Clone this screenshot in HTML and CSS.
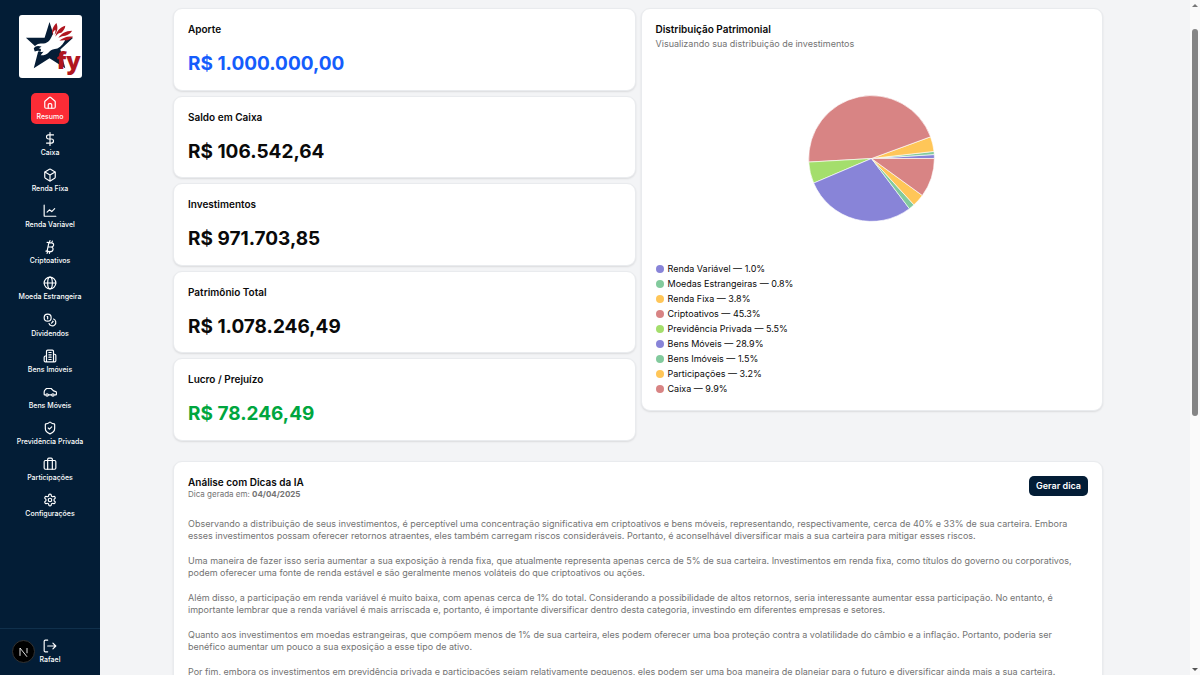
FILE: index.html
```html
<!DOCTYPE html>
<html lang="pt-BR">
<head>
    <meta charset="UTF-8">
    <meta name="viewport" content="width=device-width, initial-scale=1">
    <title>Resumo</title>
    <link rel="stylesheet" href="styles.css">
</head>
<body>
<div class="layout">
    <aside class="sidebar">
        <a class="logo" href="#" aria-label="fy">
            <svg viewBox="0 0 64 64">
                <path fill="#051d36" d="M31 7l5 16h19L42 35l5 19-16-10-16 10 5-19L7 23h19z"/>
                <path fill="#fff" d="M15 34c2-5 6-5 10-5 5-1 7-4 9-9l4-3 10 6c-2 5-5 9-9 11-4 1-6 1-8 3-2 3-5 4-9 4l3-4c-2 1-5 1-6-1z"/>
                <path fill="#051d36" d="M15 34c2-3 4-3 8-2l-3 2c3 0 3 2 1 4 0-2-2-2-5-1z"/>
                <path fill="#b0161f" d="M38 8c-4 4-5 8-4 13 0-3 1-5 3-6 0 2 0 3-1 5 3-3 4-7 2-12zM47 11c-6 2-9 6-10 11 2-3 4-4 6-4 2-2 4-4 4-7zM54 16c-7 0-11 3-14 7 3-1 5-2 7-2 3-1 5-2 7-5zM55 22c-6-1-10 1-14 4 3 0 5-1 7 0 3-1 5-2 7-4z"/>
                <text x="38" y="55" class="logo-text">fy</text>
            </svg>
        </a>
        <nav class="menu">
            <a class="menu-item active" href="#">
                <svg class="icon" viewBox="0 0 24 24"><path d="M15 21v-6a2 2 0 0 0-2-2h-2a2 2 0 0 0-2 2v6"/><path d="M3 10a2 2 0 0 1 .7-1.500l7-6a2 2 0 0 1 2.600 0l7 6A2 2 0 0 1 21 10v9a2 2 0 0 1-2 2H5a2 2 0 0 1-2-2z"/></svg>
                Resumo
            </a>
            <a class="menu-item" href="#">
                <svg class="icon" viewBox="0 0 24 24"><path d="M12 1v22M18 5H9.500a3.500 3.500 0 0 0 0 7h5a3.500 3.500 0 0 1 0 7H6"/></svg>
                Caixa
            </a>
            <a class="menu-item" href="#">
                <svg class="icon" viewBox="0 0 24 24"><path d="M21 8a2 2 0 0 0-1-1.700l-7-4a2 2 0 0 0-2 0l-7 4A2 2 0 0 0 3 8v8a2 2 0 0 0 1 1.700l7 4a2 2 0 0 0 2 0l7-4a2 2 0 0 0 1-1.700z"/><path d="M3.300 7l8.700 5 8.700-5M12 22V12"/></svg>
                Renda Fixa
            </a>
            <a class="menu-item" href="#">
                <svg class="icon" viewBox="0 0 24 24"><path d="M2 2v18a1 1 0 0 0 1 1h19"/><path d="M7 14l4-4 4 3 5-5"/></svg>
                Renda Variável
            </a>
            <a class="menu-item" href="#">
                <svg class="icon" viewBox="0 0 24 24"><path d="M7 4l8 1c5 1 4 7-1 7H9M14 12c5 1 4 8-2 8l-7-1M10 5L7 19M12 1l-1 3M16 2l-1 3M8 20l-1 3M12 20l-1 3"/></svg>
                Criptoativos
            </a>
            <a class="menu-item" href="#">
                <svg class="icon" viewBox="0 0 24 24"><circle cx="12" cy="12" r="10"/><ellipse cx="12" cy="12" rx="4" ry="10"/><path d="M2 12h20"/></svg>
                Moeda Estrangeira
            </a>
            <a class="menu-item" href="#">
                <svg class="icon" viewBox="0 0 24 24"><circle cx="8" cy="8" r="6"/><path d="M18.100 10.400A6 6 0 1 1 10.300 18M7 6h1v4M16.700 13.900l.7.7-2.800 2.800"/></svg>
                Dividendos
            </a>
            <a class="menu-item" href="#">
                <svg class="icon" viewBox="0 0 24 24"><path d="M6 22V4a2 2 0 0 1 2-2h8a2 2 0 0 1 2 2v18zM6 12H4a2 2 0 0 0-2 2v6a2 2 0 0 0 2 2h2M18 9h2a2 2 0 0 1 2 2v9a2 2 0 0 1-2 2h-2M10 6h4M10 10h4M10 14h4M10 18h4"/></svg>
                Bens Imóveis
            </a>
            <a class="menu-item" href="#">
                <svg class="icon" viewBox="0 0 24 24"><path d="M4 17H3c-1 0-1-1-1-1v-4c0-2 1-3 2-4l2-2h8l4 4 3 1c1 0 2 1 2 2v3c0 1-1 1-1 1h-2M9 17h6"/><circle cx="7" cy="17" r="2"/><circle cx="17" cy="17" r="2"/></svg>
                Bens Móveis
            </a>
            <a class="menu-item" href="#">
                <svg class="icon" viewBox="0 0 24 24"><path d="M20 13c0 5-3.500 7.500-8 9-4.500-1.500-8-4-8-9V6a1 1 0 0 1 1-1c2 0 4.500-1.200 6.200-2.700a1 1 0 0 1 1.600 0C14.500 3.800 17 5 19 5a1 1 0 0 1 1 1z"/><path d="M9 12l2 2 4-4"/></svg>
                Previdência Privada
            </a>
            <a class="menu-item" href="#">
                <svg class="icon" viewBox="0 0 24 24"><rect x="2" y="6" width="20" height="15" rx="2"/><path d="M8 21V4a2 2 0 0 1 2-2h4a2 2 0 0 1 2 2v17"/></svg>
                Participações
            </a>
            <a class="menu-item" href="#">
                <svg class="icon" viewBox="0 0 24 24"><path d="M12.220 2h-.44a2 2 0 0 0-2 2v.18a2 2 0 0 1-1 1.730l-.43.25a2 2 0 0 1-2 0l-.15-.08a2 2 0 0 0-2.730.73l-.22.38a2 2 0 0 0 .73 2.730l.15.1a2 2 0 0 1 1 1.720v.51a2 2 0 0 1-1 1.740l-.15.09a2 2 0 0 0-.73 2.730l.22.38a2 2 0 0 0 2.730.73l.15-.08a2 2 0 0 1 2 0l.43.25a2 2 0 0 1 1 1.730V20a2 2 0 0 0 2 2h.44a2 2 0 0 0 2-2v-.18a2 2 0 0 1 1-1.730l.43-.25a2 2 0 0 1 2 0l.15.08a2 2 0 0 0 2.730-.73l.22-.39a2 2 0 0 0-.73-2.730l-.15-.08a2 2 0 0 1-1-1.740v-.5a2 2 0 0 1 1-1.740l.15-.09a2 2 0 0 0 .73-2.730l-.22-.38a2 2 0 0 0-2.730-.73l-.15.08a2 2 0 0 1-2 0l-.43-.25a2 2 0 0 1-1-1.730V4a2 2 0 0 0-2-2z"/><circle cx="12" cy="12" r="3"/></svg>
                Configurações
            </a>
        </nav>
        <div class="user">
            <a class="menu-item" href="#">
                <svg class="icon" viewBox="0 0 24 24"><path d="M8 2H4a2 2 0 0 0-2 2v16a2 2 0 0 0 2 2h4M8 12h14M17 7l5 5-5 5"/></svg>
                Rafael
            </a>
        </div>
    </aside>

    <main class="content">
        <div class="container">
            <div class="summary">
                <div class="totals">
                    <section class="card">
                        <h2 class="card-title">Aporte</h2>
                        <p class="value blue">R$ 1.000.000,00</p>
                    </section>
                    <section class="card">
                        <h2 class="card-title">Saldo em Caixa</h2>
                        <p class="value">R$ 106.542,64</p>
                    </section>
                    <section class="card">
                        <h2 class="card-title">Investimentos</h2>
                        <p class="value">R$ 971.703,85</p>
                    </section>
                    <section class="card">
                        <h2 class="card-title">Patrimônio Total</h2>
                        <p class="value">R$ 1.078.246,49</p>
                    </section>
                    <section class="card">
                        <h2 class="card-title">Lucro / Prejuízo</h2>
                        <p class="value green">R$ 78.246,49</p>
                    </section>
                </div>

                <section class="card chart-card">
                    <h2 class="card-title">Distribuição Patrimonial</h2>
                    <p class="card-subtitle">Visualizando sua distribuição de investimentos</p>
                    <svg class="pie" viewBox="-101 -101 202 202" role="img" aria-label="Distribuição Patrimonial">
                        <path fill="#8884d8" d="M0 0L100 0A100 100 0 0 0 99.800 -6.300Z"/>
                        <path fill="#82ca9d" d="M0 0L99.800 -6.300A100 100 0 0 0 99.400 -11.300Z"/>
                        <path fill="#ffc658" d="M0 0L99.400 -11.300A100 100 0 0 0 93.900 -34.500Z"/>
                        <path fill="#d88484" d="M0 0L93.900 -34.500A100 100 0 0 0 -99.800 5.700Z"/>
                        <path fill="#a4de6c" d="M0 0L-99.800 5.700A100 100 0 0 0 -92 39.100Z"/>
                        <path fill="#8884d8" d="M0 0L-92 39.100A100 100 0 0 0 60.300 79.800Z"/>
                        <path fill="#82ca9d" d="M0 0L60.300 79.800A100 100 0 0 0 67.500 73.700Z"/>
                        <path fill="#ffc658" d="M0 0L67.500 73.700A100 100 0 0 0 80.900 58.800Z"/>
                        <path fill="#d88484" d="M0 0L80.900 58.800A100 100 0 0 0 100 0Z"/>
                    </svg>
                    <ul class="legend">
                        <li><span class="dot purple"></span>Renda Variável — 1.0%</li>
                        <li><span class="dot mint"></span>Moedas Estrangeiras — 0.8%</li>
                        <li><span class="dot yellow"></span>Renda Fixa — 3.8%</li>
                        <li><span class="dot rose"></span>Criptoativos — 45.3%</li>
                        <li><span class="dot lime"></span>Previdência Privada — 5.5%</li>
                        <li><span class="dot purple"></span>Bens Móveis — 28.9%</li>
                        <li><span class="dot mint"></span>Bens Imóveis — 1.5%</li>
                        <li><span class="dot yellow"></span>Participações — 3.2%</li>
                        <li><span class="dot rose"></span>Caixa — 9.9%</li>
                    </ul>
                </section>
            </div>

            <section class="card tips">
                <header class="tips-header">
                    <div>
                        <h2 class="card-title">Análise com Dicas da IA</h2>
                        <p class="tips-date">Dica gerada em: <strong>04/04/2025</strong></p>
                    </div>
                    <button class="button" type="button">Gerar dica</button>
                </header>
                <div class="tips-text">
                    <p>Observando a distribuição de seus investimentos, é perceptível uma concentração significativa em criptoativos e bens móveis, representando, respectivamente, cerca de 40% e 33% de sua carteira. Embora esses investimentos possam oferecer retornos atraentes, eles também carregam riscos consideráveis. Portanto, é aconselhável diversificar mais a sua carteira para mitigar esses riscos.</p>
                    <p>Uma maneira de fazer isso seria aumentar a sua exposição à renda fixa, que atualmente representa apenas cerca de 5% de sua carteira. Investimentos em renda fixa, como títulos do governo ou corporativos, podem oferecer uma fonte de renda estável e são geralmente menos voláteis do que criptoativos ou ações.</p>
                    <p>Além disso, a participação em renda variável é muito baixa, com apenas cerca de 1% do total. Considerando a possibilidade de altos retornos, seria interessante aumentar essa participação. No entanto, é importante lembrar que a renda variável é mais arriscada e, portanto, é importante diversificar dentro desta categoria, investindo em diferentes empresas e setores.</p>
                    <p>Quanto aos investimentos em moedas estrangeiras, que compõem menos de 1% de sua carteira, eles podem oferecer uma boa proteção contra a volatilidade do câmbio e a inflação. Portanto, poderia ser benéfico aumentar um pouco a sua exposição a esse tipo de ativo.</p>
                    <p>Por fim, embora os investimentos em previdência privada e participações sejam relativamente pequenos, eles podem ser uma boa maneira de planejar para o futuro e diversificar ainda mais a sua carteira.</p>
                </div>
            </section>
        </div>
    </main>

    <div class="scrollbar">
        <span class="arrow up"></span>
        <span class="thumb"></span>
        <span class="arrow down"></span>
    </div>
</div>

<button class="dev-badge" type="button" aria-label="Next.js">
    <svg viewBox="0 0 24 24"><path d="M8 17V8l8 10M16 8v6"/></svg>
</button>
</body>
</html>
```
FILE: styles.css
```css
* {
    box-sizing: border-box;
    margin: 0;
    padding: 0;
}

body {
    font-family: Inter, "Liberation Sans", sans-serif;
    font-size: 9px;
    color: #0a0a0a;
    background-color: #f3f4f6;
}

a {
    color: inherit;
    text-decoration: none;
}

.layout {
    display: flex;
    height: 100vh;
    overflow: hidden;
}

/* sidebar */
.sidebar {
    display: flex;
    flex-direction: column;
    flex: 0 0 100px;
    align-items: center;
    padding-top: 15px;
    background-color: #031d36;
    color: white;
}

.logo {
    width: 63px;
    height: 63px;
    border-radius: 3px;
    background-color: white;
}

.logo svg {
    display: block;
}

.logo-text {
    font-family: "Open Sans", sans-serif;
    font-size: 24px;
    font-weight: 800;
    fill: #b0161f;
}

.menu {
    display: grid;
    grid-auto-rows: 1fr;
    justify-items: center;
    gap: 5px;
    min-height: 429px;
    margin-top: 15px;
}

.menu-item {
    display: flex;
    flex-direction: column;
    align-items: center;
    justify-content: center;
    gap: 2px;
    padding: 0 6px;
    border-radius: 5px;
    font-size: 7px;
    font-weight: 500;
    line-height: 10px;
    white-space: nowrap;
}

.menu-item.active {
    background-color: #fb2c36;
}

.icon {
    width: 14px;
    height: 14px;
    fill: none;
    stroke: currentColor;
    stroke-width: 2;
    stroke-linecap: round;
    stroke-linejoin: round;
}

.user {
    display: flex;
    justify-content: center;
    width: 100%;
    margin-top: auto;
    padding: 10px 0;
    border-top: 1px solid #10304c;
}

/* content */
.content {
    flex: 1;
    min-width: 0;
    padding: 8px 87px 0 73px;
}

.summary {
    display: grid;
    grid-template-columns: 1fr 1fr;
    align-items: start;
    gap: 5px;
}

.totals {
    display: grid;
    grid-auto-rows: 1fr;
    gap: 5px;
    min-height: 433px;
}

.card {
    padding: 14px 14px 12px;
    border: 1px solid #e9ebee;
    border-radius: 9px;
    background-color: white;
    box-shadow: 0 1px 2px rgba(0, 0, 0, 0.1);
}

.card-title {
    font-size: 10px;
    font-weight: 600;
    line-height: 12px;
}

.card-subtitle {
    margin-top: 2px;
    line-height: 13px;
    color: #737373;
}

.value {
    margin-top: 17px;
    font-size: 19px;
    font-weight: 700;
    line-height: 24px;
}

.blue {
    color: #155dfc;
}

.green {
    color: #00a63e;
}

.pie {
    display: block;
    width: 127px;
    height: 127px;
    margin: 45px auto 39px;
    stroke: white;
    stroke-width: 1;
}

.legend {
    padding-bottom: 2px;
    list-style: none;
    line-height: 15px;
}

.legend li {
    display: flex;
    align-items: center;
    gap: 4px;
}

.dot {
    width: 8px;
    height: 8px;
    border-radius: 50%;
}

.purple {
    background-color: #8884d8;
}

.mint {
    background-color: #82ca9d;
}

.yellow {
    background-color: #ffc658;
}

.rose {
    background-color: #d88484;
}

.lime {
    background-color: #a4de6c;
}

.tips {
    margin-top: 20px;
}

.tips-header {
    display: flex;
    align-items: flex-start;
    justify-content: space-between;
    min-height: 42px;
}

.tips-date {
    font-size: 8px;
    line-height: 12px;
    color: #737373;
}

.button {
    padding: 0 7px;
    border: none;
    border-radius: 5px;
    background-color: #031d36;
    color: white;
    font-family: inherit;
    font-size: 9px;
    font-weight: 600;
    line-height: 20px;
}

.tips-text {
    display: grid;
    gap: 13px;
    line-height: 12px;
    color: #737373;
}

/* page scrollbar */
.scrollbar {
    display: flex;
    flex-direction: column;
    flex: 0 0 10px;
    align-items: center;
    padding: 4px 0;
    background-color: #fafafa;
}

.thumb {
    width: 6px;
    height: 58%;
    margin-top: 22px;
    border-radius: 3px;
    background-color: #858585;
}

.arrow {
    border: 3px solid transparent;
}

.up {
    border-top: none;
    border-bottom-color: #777;
}

.down {
    margin-top: auto;
    border-bottom: none;
    border-top-color: #555;
}

/* floating framework badge */
.dev-badge {
    position: fixed;
    bottom: 12px;
    left: 12px;
    width: 23px;
    height: 23px;
    border: 1px solid #333;
    border-radius: 50%;
    background-color: black;
}

.dev-badge svg {
    display: block;
    fill: none;
    stroke: white;
    stroke-width: 1;
}
```
